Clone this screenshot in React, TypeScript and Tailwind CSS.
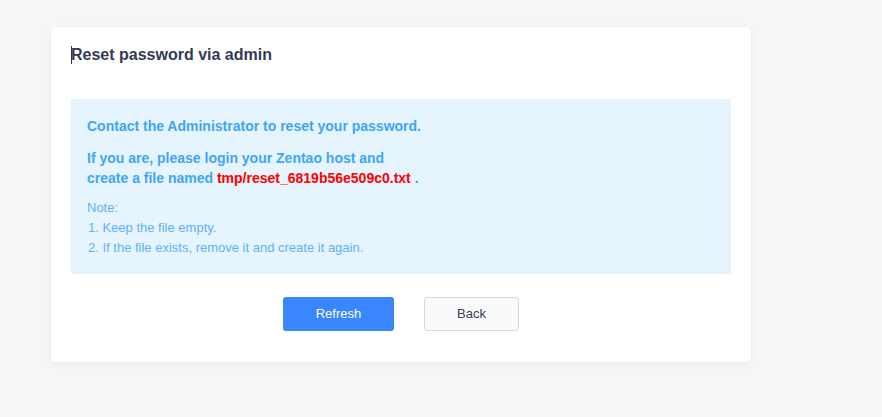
export default function App() {
  return (
    <div className="min-h-[417px] w-full bg-[#f5f6f8] pt-[27px] pl-[51px] font-['Liberation_Sans',Arial,sans-serif]">
      <div className="w-[700px] rounded-[4px] bg-white px-5 pt-[18px] pb-[31px] shadow-[0_2px_8px_rgba(0,0,0,0.05)]">
        <div className="flex h-[20px] items-center">
          <span className="mr-[-1px] h-[18px] w-px bg-[#313c52]" />
          <h1 className="text-[16px] font-bold text-[#313c52]">Reset password via admin</h1>
        </div>

        <div className="mt-[34px] bg-[#e6f4fe] px-4 pt-[17px] pb-[16px] text-[#3fa6f5]">
          <p className="text-[14px] font-bold leading-[20px]">Contact the Administrator to reset your password.</p>
          <p className="mt-3 text-[14px] font-bold leading-[20px]">
            If you are, please login your Zentao host and
            <br />
            create a file named <span className="text-[#ff0000]">tmp/reset_6819b56e509c0.txt</span> .
          </p>
          <div className="mt-[10px] text-[13px] leading-[20px] text-[#5cb3f5]">
            <div>Note:</div>
            <div className="pl-[1px]">1. Keep the file empty.</div>
            <div className="pl-[1px]">2. If the file exists, remove it and create it again.</div>
          </div>
        </div>

        <div className="mt-[23px] flex justify-center gap-[30px]">
          <button className="h-[34px] w-[111px] rounded-[3px] bg-[#3a86ff] text-[13px] text-white">Refresh</button>
          <button className="h-[34px] w-[95px] rounded-[3px] border border-[#d3d8e5] bg-[#f9fafc] text-[13px] text-[#313c52]">Back</button>
        </div>
      </div>
    </div>
  )
}
